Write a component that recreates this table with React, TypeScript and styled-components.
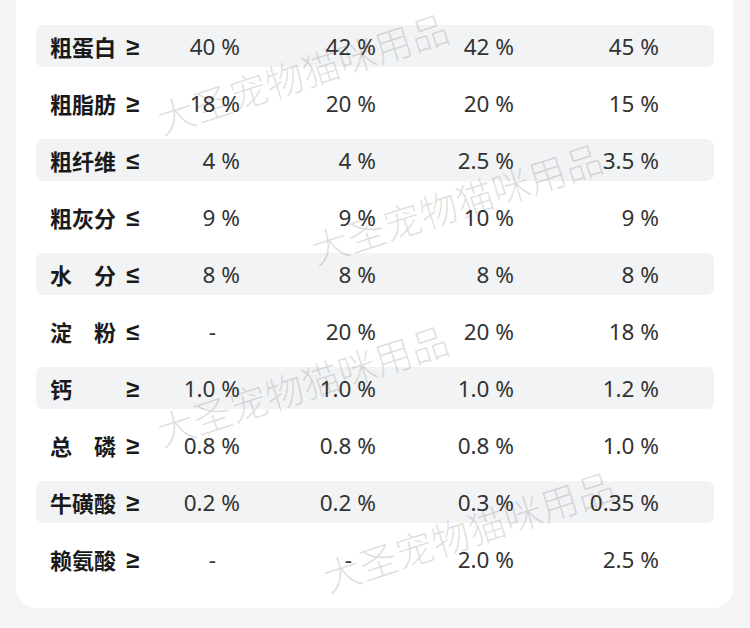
import React from 'react';
import styled, { createGlobalStyle } from 'styled-components';

interface NutrientRow {
  name: string;
  sign: string;
  values: string[];
}

const rows: NutrientRow[] = [
  { name: '粗蛋白', sign: '≥', values: ['40 %', '42 %', '42 %', '45 %'] },
  { name: '粗脂肪', sign: '≥', values: ['18 %', '20 %', '20 %', '15 %'] },
  { name: '粗纤维', sign: '≤', values: ['4 %', '4 %', '2.5 %', '3.5 %'] },
  { name: '粗灰分', sign: '≤', values: ['9 %', '9 %', '10 %', '9 %'] },
  { name: '水分', sign: '≤', values: ['8 %', '8 %', '8 %', '8 %'] },
  { name: '淀粉', sign: '≤', values: ['-', '20 %', '20 %', '18 %'] },
  { name: '钙', sign: '≥', values: ['1.0 %', '1.0 %', '1.0 %', '1.2 %'] },
  { name: '总磷', sign: '≥', values: ['0.8 %', '0.8 %', '0.8 %', '1.0 %'] },
  { name: '牛磺酸', sign: '≥', values: ['0.2 %', '0.2 %', '0.3 %', '0.35 %'] },
  { name: '赖氨酸', sign: '≥', values: ['-', '-', '2.0 %', '2.5 %'] },
];

// watermark centres, relative to the card
const marks = [
  { x: 286, y: 72 },
  { x: 440, y: 202 },
  { x: 286, y: 384 },
  { x: 452, y: 530 },
];

const App = () => {
  return (
    <>
      <GlobalStyle />
      <Page>
        <Card>
          {rows.map((row, i) => (
            <Row key={row.name} $striped={i % 2 === 0}>
              <Label>
                <LabelChars>
                  {row.name.split('').map((ch, j) => (
                    <span key={j}>{ch}</span>
                  ))}
                </LabelChars>
                <Sign>{row.sign}</Sign>
              </Label>
              {row.values.map((v, j) => (
                <Value key={j} $empty={v === '-'}>
                  {v}
                </Value>
              ))}
            </Row>
          ))}
          {marks.map((m, i) => (
            <Watermark key={i} style={{ left: m.x, top: m.y }}>
              大圣宠物猫咪用品
            </Watermark>
          ))}
        </Card>
      </Page>
    </>
  );
};

export default App;

const GlobalStyle = createGlobalStyle`
  html, body {
    margin: 0;
    padding: 0;
    background: #f4f4f4;
  }
  body {
    font-family: "Noto Sans", "Noto Sans CJK SC", sans-serif;
  }
`;

const Page = styled.div`
  width: 750px;
  height: 628px;
  overflow: hidden;
  background: #f4f4f4;
`;

const Card = styled.div`
  position: relative;
  overflow: hidden;
  margin-left: 16px;
  width: 717px;
  box-sizing: border-box;
  padding: 25px 19px 28px 20px;
  background: #ffffff;
  border-radius: 0 0 20px 20px;
  display: flex;
  flex-direction: column;
  gap: 15px;
`;

const Row = styled.div<{ $striped: boolean }>`
  height: 42px;
  display: grid;
  grid-template-columns: 100px 90px 136px 138px 145px;
  align-items: center;
  padding-left: 14px;
  border-radius: 7px;
  background: ${(p) => (p.$striped ? '#f2f3f5' : 'transparent')};
`;

const Label = styled.div`
  display: flex;
  align-items: center;
  font-family: "Noto Sans CJK SC", sans-serif;
  font-size: 22px;
  font-weight: 700;
  color: #1a1a1a;
`;

const LabelChars = styled.div`
  width: 66px;
  display: flex;
  justify-content: space-between;
`;

const Sign = styled.span`
  margin-left: 10px;
  font-family: "Noto Sans", sans-serif;
  font-weight: 700;
  font-size: 24px;
  line-height: 1;
`;

const Value = styled.div<{ $empty: boolean }>`
  text-align: right;
  font-family: "Noto Sans", sans-serif;
  font-size: 22.5px;
  font-weight: 400;
  color: #333;
  padding-right: ${(p) => (p.$empty ? '24px' : '0')};
`;

const Watermark = styled.span`
  position: absolute;
  transform: translate(-50%, -50%) rotate(-18deg);
  white-space: nowrap;
  pointer-events: none;
  font-family: "Noto Sans CJK SC", sans-serif;
  font-size: 38px;
  font-weight: 300;
  color: rgba(0, 0, 0, 0.12);
`;
